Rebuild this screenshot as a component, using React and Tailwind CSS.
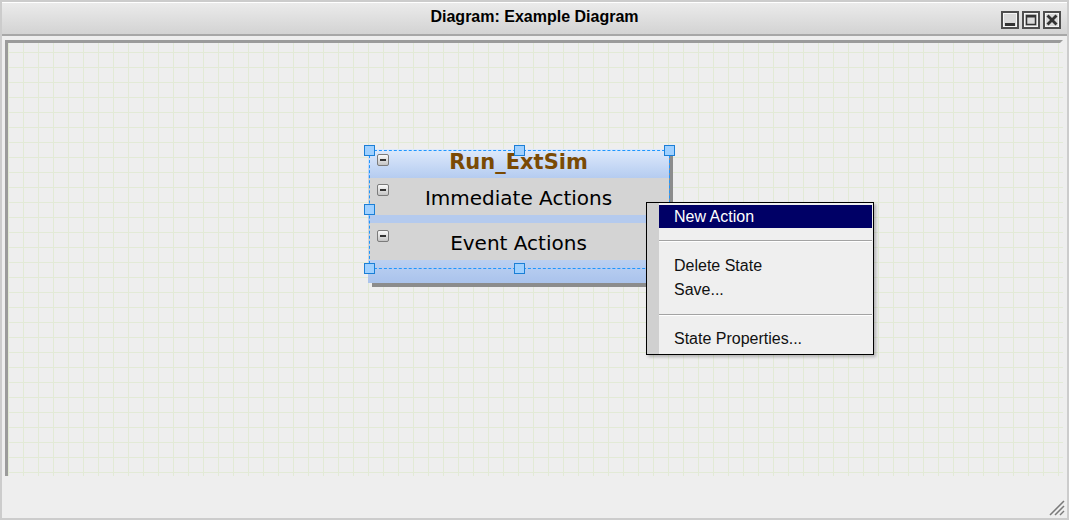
import React from 'react';

const sans = { fontFamily: '"Liberation Sans", Arial, sans-serif' };
const deja = { fontFamily: '"DejaVu Sans", Verdana, sans-serif' };

function WinButton({ kind }) {
  return (
    <svg width="18" height="18" viewBox="0 0 18 18">
      <rect x="1" y="1" width="16" height="16" fill="#dadada" stroke="#4e4e4e" strokeWidth="2" />
      <rect x="2.5" y="2.5" width="13" height="13" fill="none" stroke="#f6f6f6" strokeWidth="1" />
      {kind === 'min' && <rect x="4" y="12" width="10" height="3" fill="#333" />}
      {kind === 'max' && (
        <>
          <rect x="4.5" y="4.5" width="9" height="9" fill="none" stroke="#333" strokeWidth="1.5" />
          <rect x="4" y="4" width="10" height="2.5" fill="#333" />
        </>
      )}
      {kind === 'close' && (
        <>
          <line x1="4.5" y1="4.5" x2="13.5" y2="13.5" stroke="#333" strokeWidth="2.8" />
          <line x1="13.5" y1="4.5" x2="4.5" y2="13.5" stroke="#333" strokeWidth="2.8" />
        </>
      )}
    </svg>
  );
}

function Collapse({ className }) {
  return (
    <div
      className={`w-[12px] h-[12px] rounded-[2px] border border-[#7b7b7b] bg-linear-to-b from-[#fafafa] to-[#c4c4c4] flex items-center justify-center ${className}`}
    >
      <div className="w-[6px] h-[2px] bg-[#333]" />
    </div>
  );
}

function Handle({ className }) {
  return <div className={`absolute w-[11px] h-[11px] bg-[#9fd0ff] border border-[#1a7fd6] ${className}`} />;
}

function StateNode() {
  return (
    <>
      <div className="absolute left-[360px] top-[106px] w-[301px] flex flex-col shadow-[4px_4px_0_0_#8c8c8c]" style={deja}>
        <div className="h-[29px] grid grid-cols-[24px_1fr_24px] bg-linear-to-b from-[#dfeafb] to-[#b5ccf0]">
          <Collapse className="ml-[9px] mt-[5px]" />
          <div className="text-center text-[21px] font-bold text-[#7a4a04] leading-[27px]">Run_ExtSim</div>
        </div>
        <div className="h-[37px] grid grid-cols-[24px_1fr_24px] bg-[#d4d4d4]">
          <Collapse className="ml-[9px] mt-[6px]" />
          <div className="text-center text-[20px] text-black leading-[37px] pt-[2px]">Immediate Actions</div>
        </div>
        <div className="h-[8px] bg-[#b4caee]" />
        <div className="h-[37px] grid grid-cols-[24px_1fr_24px] bg-[#d4d4d4]">
          <Collapse className="ml-[9px] mt-[7px]" />
          <div className="text-center text-[20px] text-black leading-[37px] pt-[2px]">Event Actions</div>
        </div>
        <div className="h-[23px] bg-linear-to-b from-[#bcd1f2] to-[#aac3ec]" />
      </div>

      <div className="absolute left-[361px] top-[107px] w-[301px] h-[119px] border border-dashed border-[#1e96ff]">
        <Handle className="left-[-6px] top-[-6px]" />
        <Handle className="left-[144px] top-[-6px]" />
        <Handle className="right-[-6px] top-[-6px]" />
        <Handle className="left-[-6px] top-[53px]" />
        <Handle className="right-[-6px] top-[53px]" />
        <Handle className="left-[-6px] bottom-[-6px]" />
        <Handle className="left-[144px] bottom-[-6px]" />
        <Handle className="right-[-6px] bottom-[-6px]" />
      </div>
    </>
  );
}

function ContextMenu() {
  return (
    <div
      className="absolute left-[638px] top-[159px] w-[228px] h-[153px] border border-black bg-[#efefef] flex shadow-[2px_2px_3px_rgba(0,0,0,0.25)]"
      style={sans}
    >
      <div className="w-[12px] bg-[#d0d0d0]" />
      <div className="flex-1 flex flex-col pt-[2px] pr-[1px] text-[16px] text-[#111]">
        <div className="h-[23px] bg-[#000066] text-white pl-[15px] flex items-center">New Action</div>
        <div className="h-[26px] flex flex-col justify-center">
          <div className="h-[1px] bg-[#a3a3a3]" />
          <div className="h-[1px] bg-white" />
        </div>
        <div className="h-[24px] pl-[15px] flex items-center">Delete State</div>
        <div className="h-[24px] pl-[15px] flex items-center">Save...</div>
        <div className="h-[25px] flex flex-col justify-center">
          <div className="h-[1px] bg-[#a3a3a3]" />
          <div className="h-[1px] bg-white" />
        </div>
        <div className="h-[24px] pl-[15px] flex items-center">State Properties...</div>
      </div>
    </div>
  );
}

export default function App() {
  return (
    <div className="relative w-[1069px] h-[520px] bg-[#eeeeee] border-2 border-[#cccccc] flex flex-col overflow-hidden">
      {/* title bar */}
      <div className="h-[34px] shrink-0 border-t border-white border-b-2 border-b-[#a7a7a7] bg-linear-to-b from-[#ebebeb] to-[#d3d3d3] grid grid-cols-[1fr_auto_1fr]">
        <div />
        <div className="text-[16px] font-bold text-black leading-[28px]" style={sans}>
          Diagram: Example Diagram
        </div>
        <div className="flex justify-end items-start gap-[3px] pt-[8px] pr-[6px]">
          <WinButton kind="min" />
          <WinButton kind="max" />
          <WinButton kind="close" />
        </div>
      </div>

      {/* canvas */}
      <div className="ml-[3px] mt-[4px] w-[1058px] h-[436px] shrink-0 relative border-l-[3px] border-t-[3px] border-[#9b9b9b] border-r-[3px] border-r-transparent bg-[#eeeeee] bg-[linear-gradient(to_right,#e2eAd6_1px,transparent_1px),linear-gradient(to_bottom,#e2ead6_1px,transparent_1px)] bg-[size:15px_15px] bg-[position:0px_9px]">
        <StateNode />
        <ContextMenu />
      </div>

      {/* resize grip */}
      <svg className="absolute right-[2px] bottom-[2px]" width="18" height="18" viewBox="0 0 18 18">
        <line x1="17" y1="3" x2="3" y2="17" stroke="#7a7a7a" strokeWidth="1.5" />
        <line x1="17" y1="8" x2="8" y2="17" stroke="#7a7a7a" strokeWidth="1.5" />
        <line x1="17" y1="13" x2="13" y2="17" stroke="#7a7a7a" strokeWidth="1.5" />
      </svg>
    </div>
  );
}
